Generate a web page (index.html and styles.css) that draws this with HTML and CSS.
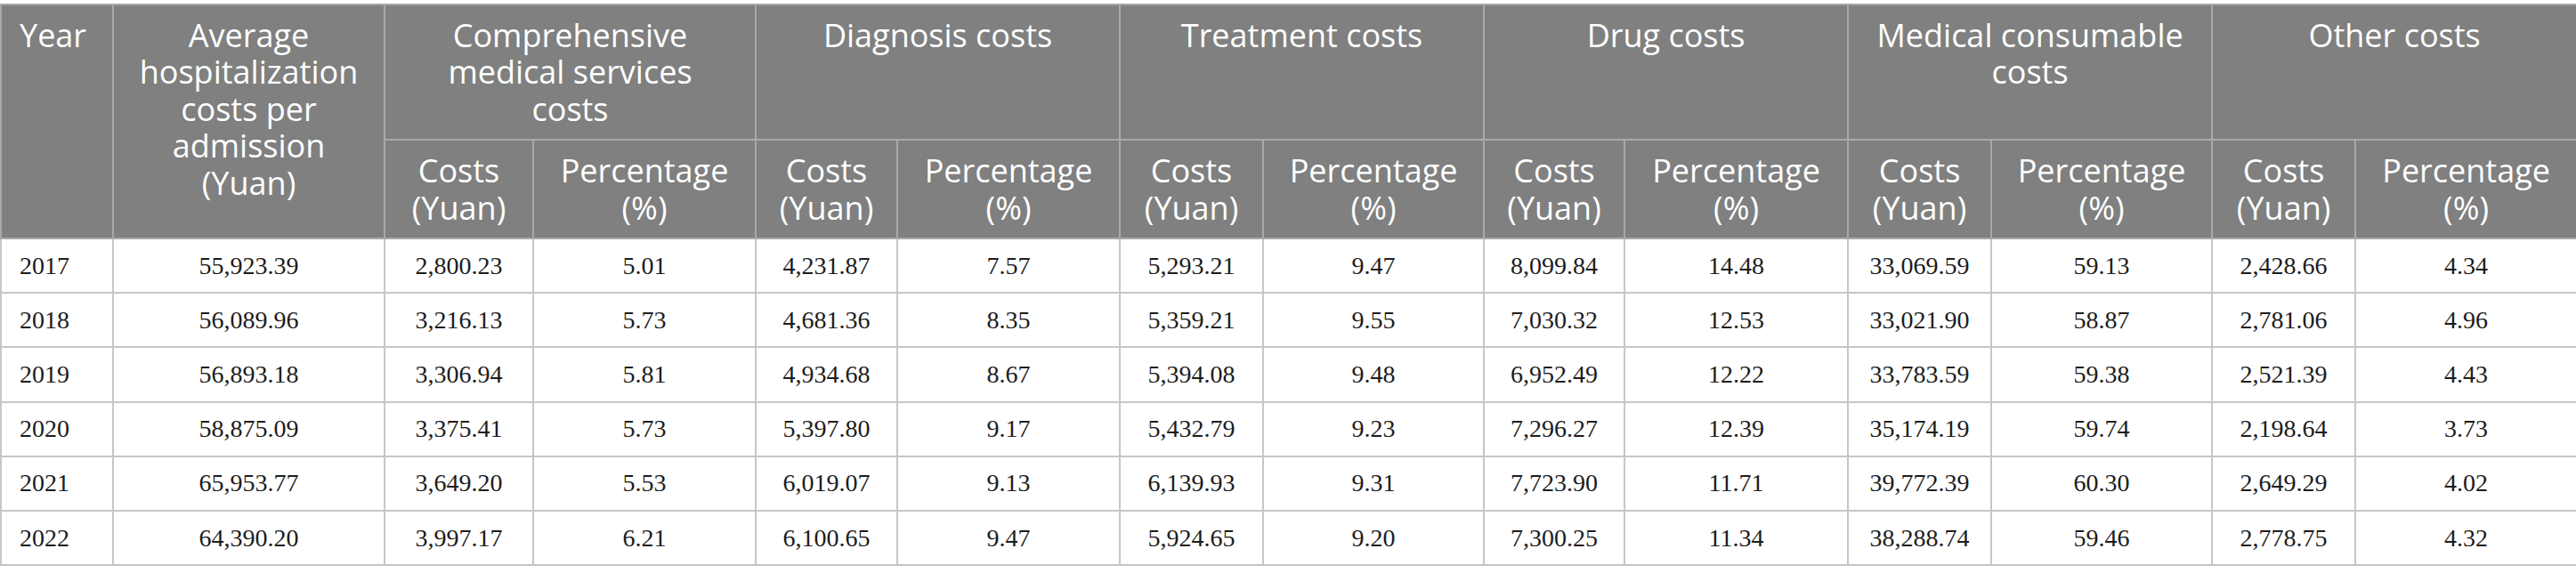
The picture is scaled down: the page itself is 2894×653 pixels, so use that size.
FILE: index.html
```html
<!DOCTYPE html>
<html lang="en">
<head>
<meta charset="utf-8">
<title>Hospitalization costs</title>
<link rel="stylesheet" href="styles.css">
</head>
<body>
<table class="costs">
  <colgroup>
    <col class="w-year">
    <col class="w-avg">
    <col class="w-c167"><col class="w-p250">
    <col class="w-c159"><col class="w-p250">
    <col class="w-c161"><col class="w-p248">
    <col class="w-c158"><col class="w-p251">
    <col class="w-c161"><col class="w-p248">
    <col class="w-c161"><col class="w-p249">
  </colgroup>
  <thead>
    <tr>
      <th rowspan="2" class="left">Year</th>
      <th rowspan="2">Average hospitalization costs per admission (Yuan)</th>
      <th colspan="2" class="narrow">Comprehensive medical services costs</th>
      <th colspan="2">Diagnosis costs</th>
      <th colspan="2">Treatment costs</th>
      <th colspan="2">Drug costs</th>
      <th colspan="2">Medical consumable costs</th>
      <th colspan="2">Other costs</th>
    </tr>
    <tr>
      <th>Costs (Yuan)</th><th>Percentage (%)</th>
      <th>Costs (Yuan)</th><th>Percentage (%)</th>
      <th>Costs (Yuan)</th><th>Percentage (%)</th>
      <th>Costs (Yuan)</th><th>Percentage (%)</th>
      <th>Costs (Yuan)</th><th>Percentage (%)</th>
      <th>Costs (Yuan)</th><th>Percentage (%)</th>
    </tr>
  </thead>
  <tbody>
    <tr><td class="left">2017</td><td>55,923.39</td><td>2,800.23</td><td>5.01</td><td>4,231.87</td><td>7.57</td><td>5,293.21</td><td>9.47</td><td>8,099.84</td><td>14.48</td><td>33,069.59</td><td>59.13</td><td>2,428.66</td><td>4.34</td></tr>
    <tr><td class="left">2018</td><td>56,089.96</td><td>3,216.13</td><td>5.73</td><td>4,681.36</td><td>8.35</td><td>5,359.21</td><td>9.55</td><td>7,030.32</td><td>12.53</td><td>33,021.90</td><td>58.87</td><td>2,781.06</td><td>4.96</td></tr>
    <tr><td class="left">2019</td><td>56,893.18</td><td>3,306.94</td><td>5.81</td><td>4,934.68</td><td>8.67</td><td>5,394.08</td><td>9.48</td><td>6,952.49</td><td>12.22</td><td>33,783.59</td><td>59.38</td><td>2,521.39</td><td>4.43</td></tr>
    <tr><td class="left">2020</td><td>58,875.09</td><td>3,375.41</td><td>5.73</td><td>5,397.80</td><td>9.17</td><td>5,432.79</td><td>9.23</td><td>7,296.27</td><td>12.39</td><td>35,174.19</td><td>59.74</td><td>2,198.64</td><td>3.73</td></tr>
    <tr><td class="left">2021</td><td>65,953.77</td><td>3,649.20</td><td>5.53</td><td>6,019.07</td><td>9.13</td><td>6,139.93</td><td>9.31</td><td>7,723.90</td><td>11.71</td><td>39,772.39</td><td>60.30</td><td>2,649.29</td><td>4.02</td></tr>
    <tr><td class="left">2022</td><td>64,390.20</td><td>3,997.17</td><td>6.21</td><td>6,100.65</td><td>9.47</td><td>5,924.65</td><td>9.20</td><td>7,300.25</td><td>11.34</td><td>38,288.74</td><td>59.46</td><td>2,778.75</td><td>4.32</td></tr>
  </tbody>
</table>
</body>
</html>
```
FILE: styles.css
```css
html, body {
  margin: 0;
  padding: 0;
  background: #ffffff;
}

body {
  padding-top: 4px;
}

.costs {
  width: 2894px;
  border-collapse: collapse;
  table-layout: fixed;
}

.w-year { width: 126px; }
.w-avg { width: 305px; }
.w-c167 { width: 167px; }
.w-c159 { width: 159px; }
.w-c161 { width: 161px; }
.w-c158 { width: 158px; }
.w-p250 { width: 250px; }
.w-p248 { width: 248px; }
.w-p251 { width: 251px; }
.w-p249 { width: 249px; }

.costs th {
  background: #7f807f;
  color: #ffffff;
  font-family: "Open Sans", "Noto Sans", sans-serif;
  font-weight: 400;
  font-size: 36px;
  line-height: 41.4px;
  text-align: center;
  vertical-align: top;
  padding: 13px 18px;
  border: 2px solid #a9a9a9;
}

.costs th.narrow {
  padding-left: 55px;
  padding-right: 55px;
}

.costs td {
  color: #1c1c1c;
  font-family: "Liberation Serif", "Times New Roman", serif;
  font-size: 28px;
  line-height: 32px;
  text-align: center;
  vertical-align: middle;
  padding: 13.6px 16px;
  border: 2px solid #c6c6c6;
}

.costs .left {
  text-align: left;
  padding-left: 20px;
}
```
